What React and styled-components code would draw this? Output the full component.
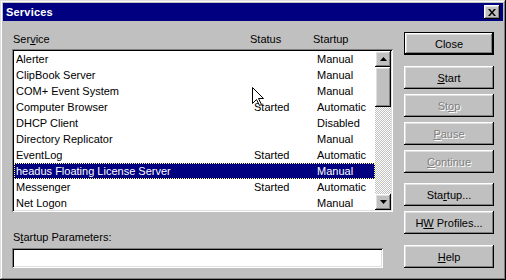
import React from 'react';
import styled, { createGlobalStyle, css } from 'styled-components';

const GlobalStyle = createGlobalStyle`
  html, body { margin: 0; padding: 0; background: #c0c0c0; }
  body {
    font-family: "Liberation Sans", Arial, sans-serif;
    font-size: 11px;
    color: #000;
  }
`;

const services = [
  { name: 'Alerter', status: '', startup: 'Manual' },
  { name: 'ClipBook Server', status: '', startup: 'Manual' },
  { name: 'COM+ Event System', status: '', startup: 'Manual' },
  { name: 'Computer Browser', status: 'Started', startup: 'Automatic' },
  { name: 'DHCP Client', status: '', startup: 'Disabled' },
  { name: 'Directory Replicator', status: '', startup: 'Manual' },
  { name: 'EventLog', status: 'Started', startup: 'Automatic' },
  { name: 'headus Floating License Server', status: '', startup: 'Manual', selected: true },
  { name: 'Messenger', status: 'Started', startup: 'Automatic' },
  { name: 'Net Logon', status: '', startup: 'Manual' },
];

const raised = css`
  background: #c0c0c0;
  box-shadow: inset -1px -1px #000, inset 1px 1px #fff,
    inset -2px -2px #808080, inset 2px 2px #dfdfdf;
`;

const sunken = css`
  background: #fff;
  box-shadow: inset 1px 1px #808080, inset -1px -1px #fff,
    inset 2px 2px #000, inset -2px -2px #dfdfdf;
`;

const Window = styled.div`
  position: relative;
  width: 506px;
  height: 280px;
  box-sizing: border-box;
  padding: 3px;
  display: flex;
  flex-direction: column;
  background: #c0c0c0;
  box-shadow: inset -1px -1px #000, inset 1px 1px #dfdfdf,
    inset -2px -2px #808080, inset 2px 2px #fff;
`;

const TitleBar = styled.div`
  height: 18px;
  background: #000080;
  color: #fff;
  display: flex;
  align-items: center;
  justify-content: space-between;
  padding: 0 3px;
`;

const Title = styled.span`
  font-weight: bold;
  font-size: 11px;
  letter-spacing: 0.2px;
`;

const CloseBox = styled.div`
  ${raised};
  width: 16px;
  height: 14px;
  display: flex;
  align-items: center;
  justify-content: center;
`;

const Body = styled.div`
  flex: 1;
  display: flex;
  gap: 11px;
  padding: 0 9px;
`;

const LeftPane = styled.div`
  width: 381px;
  display: flex;
  flex-direction: column;
`;

const HeaderRow = styled.div`
  margin-top: 10px;
  height: 16px;
  line-height: 16px;
  padding-left: 1px;
  display: grid;
  grid-template-columns: 237px 63px 1fr;
`;

const ListBox = styled.div`
  ${sunken};
  margin-top: 2px;
  height: 163px;
  box-sizing: border-box;
  padding: 2px;
  display: flex;
  overflow: hidden;
`;

const Rows = styled.div`
  flex: 1;
  overflow: hidden;
`;

const Row = styled.div`
  height: 16px;
  line-height: 16px;
  padding-left: 2px;
  display: grid;
  grid-template-columns: 238px 63px 1fr;
  white-space: nowrap;
  ${p => p.$selected && css`
    background: #000080;
    color: #fff;
    outline: 1px dotted #ffff80;
    outline-offset: -1px;
  `}
`;

const ScrollBar = styled.div`
  width: 16px;
  display: flex;
  flex-direction: column;
  background: repeating-conic-gradient(#c0c0c0 0% 25%, #fff 0% 50%) 0 0 / 2px 2px;
`;

const ScrollButton = styled.div`
  ${raised};
  height: 16px;
  display: flex;
  align-items: center;
  justify-content: center;
`;

const Thumb = styled.div`
  ${raised};
  height: 40px;
`;

const Track = styled.div`
  flex: 1;
`;

const Label = styled.div`
  margin-top: 17px;
  height: 16px;
  line-height: 16px;
  padding-left: 1px;
`;

const TextBox = styled.div`
  ${sunken};
  margin-top: 3px;
  width: 371px;
  height: 20px;
`;

const RightPane = styled.div`
  width: 90px;
  display: flex;
  flex-direction: column;
  padding-top: 11px;
`;

const Button = styled.div`
  ${raised};
  height: 23px;
  box-sizing: border-box;
  margin-top: ${p => p.$space || 0}px;
  display: flex;
  align-items: center;
  justify-content: center;
  white-space: pre;
  ${p => p.$default && css`
    border: 1px solid #000;
  `}
  ${p => p.$disabled && css`
    color: #808080;
    text-shadow: 1px 1px #fff;
  `}
`;

const Cursor = styled.svg`
  position: absolute;
  left: 252px;
  top: 87px;
`;

const Arrow = ({ up }) => (
  <svg width="7" height="4" viewBox="0 0 7 4">
    <path d={up ? 'M3.5 0 L7 4 L0 4 Z' : 'M0 0 L7 0 L3.5 4 Z'} fill="#000" />
  </svg>
);

export default function App() {
  return (
    <>
      <GlobalStyle />
      <Window>
        <TitleBar>
          <Title>Services</Title>
          <CloseBox>
            <svg width="8" height="7" viewBox="0 0 8 7">
              <path d="M0 0 L2 0 L4 2.5 L6 0 L8 0 L5 3.5 L8 7 L6 7 L4 4.5 L2 7 L0 7 L3 3.5 Z" fill="#000" />
            </svg>
          </CloseBox>
        </TitleBar>
        <Body>
          <LeftPane>
            <HeaderRow>
              <span>Ser<u>v</u>ice</span>
              <span>Status</span>
              <span>Startup</span>
            </HeaderRow>
            <ListBox>
              <Rows>
                {services.map(s => (
                  <Row key={s.name} $selected={s.selected}>
                    <span>{s.name}</span>
                    <span>{s.status}</span>
                    <span>{s.startup}</span>
                  </Row>
                ))}
              </Rows>
              <ScrollBar>
                <ScrollButton><Arrow up /></ScrollButton>
                <Thumb />
                <Track />
                <ScrollButton><Arrow /></ScrollButton>
              </ScrollBar>
            </ListBox>
            <Label>S<u>t</u>artup Parameters:</Label>
            <TextBox />
          </LeftPane>
          <RightPane>
            <Button $default><span>Close</span></Button>
            <Button $space={11}><span><u>S</u>tart</span></Button>
            <Button $space={5} $disabled><span>St<u>o</u>p</span></Button>
            <Button $space={5} $disabled><span><u>P</u>ause</span></Button>
            <Button $space={5} $disabled><span><u>C</u>ontinue</span></Button>
            <Button $space={10}><span>Sta<u>r</u>tup...</span></Button>
            <Button $space={5}><span>H<u>W</u> Profiles...</span></Button>
            <Button $space={11}><span><u>H</u>elp</span></Button>
          </RightPane>
        </Body>
        <Cursor width="13" height="20" viewBox="0 0 13 20">
          <path d="M0.5 0.5 L0.5 16.5 L4.5 12.5 L7.5 18.5 L9.5 17.5 L6.5 11.5 L11.5 11.5 Z" fill="#fff" stroke="#000" strokeWidth="1" />
        </Cursor>
      </Window>
    </>
  );
}
